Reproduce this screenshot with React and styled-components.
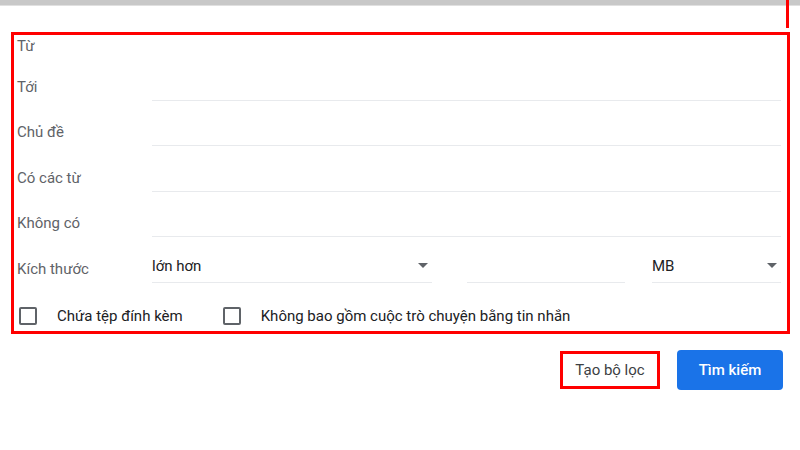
import React from 'react';
import styled, { createGlobalStyle } from 'styled-components';

const Global = createGlobalStyle`
  html, body { margin: 0; background: #fff; }
  body { font-family: Roboto, "Noto Sans", Arial, sans-serif; width: 800px; height: 450px; overflow: hidden; }
`;

const TopBar = styled.div`
  height: 5px;
  background: #c8c8c8;
  border-bottom: 1px solid #e0e0e0;
`;

const Marker = styled.div`
  position: absolute;
  left: 786px;
  top: 0;
  width: 3px;
  height: 28px;
  background: #f00;
`;

const Page = styled.div`
  position: relative;
  padding: 26px 10px 0 11px;
`;

const Box = styled.div`
  border: 3px solid #f00;
  padding: 0 6px 0 3px;
  height: 302px;
  box-sizing: border-box;
`;

const Row = styled.div`
  display: flex;
  align-items: flex-end;
  height: 45.5px;
  ${p => p.$first && 'height: 20px;'}
`;

const Label = styled.div`
  width: 135px;
  color: #5f6368;
  font-size: 15px;
  padding-bottom: 5px;
  flex: none;
`;

const Field = styled.div`
  flex: 1;
  ${p => p.$w && `flex: none; width: ${p.$w}px;`}
  height: 32px;
  border-bottom: 1px solid #e8eaed;
  display: flex;
  align-items: center;
  justify-content: space-between;
  font-size: 15px;
  color: #202124;
  margin-right: ${p => p.$mr || 0}px;
`;

const Caret = styled.span`
  width: 0;
  height: 0;
  border-left: 5px solid transparent;
  border-right: 5px solid transparent;
  border-top: 5px solid #5f6368;
  margin-right: 4px;
`;

const Checks = styled.div`
  display: flex;
  align-items: center;
  height: 66px;
  padding-left: 2px;
`;

const Check = styled.label`
  display: flex;
  align-items: center;
  font-size: 15px;
  color: #202124;
  margin-right: 40px;
`;

const Square = styled.span`
  width: 14px;
  height: 14px;
  border: 2px solid #5f6368;
  border-radius: 2px;
  margin-right: 20px;
`;

const Actions = styled.div`
  display: flex;
  justify-content: flex-end;
  align-items: center;
  gap: 17px;
  padding: 16px 7px 0 0;
`;

const FilterBtn = styled.div`
  border: 3px solid #f00;
  height: 32px;
  width: 94px;
  display: flex;
  align-items: center;
  justify-content: center;
  font-size: 15px;
  color: #3c4043;
`;

const SearchBtn = styled.div`
  background: #1a73e8;
  color: #fff;
  font-size: 15px;
  font-weight: 500;
  width: 106px;
  height: 40px;
  border-radius: 4px;
  display: flex;
  align-items: center;
  justify-content: center;
`;

const rows = ['Tới', 'Chủ đề', 'Có các từ', 'Không có'];

export default function App() {
  return (
    <>
      <Global />
      <TopBar />
      <Marker />
      <Page>
        <Box>
          <Row $first><Label style={{ paddingBottom: 0 }}>Từ</Label></Row>
          {rows.map(r => (
            <Row key={r}><Label>{r}</Label><Field /></Row>
          ))}
          <Row>
            <Label>Kích thước</Label>
            <Field $w={280} $mr={35}>lớn hơn<Caret /></Field>
            <Field $w={158} $mr={27} />
            <Field>MB<Caret /></Field>
          </Row>
          <Checks>
            <Check><Square />Chứa tệp đính kèm</Check>
            <Check><Square />Không bao gồm cuộc trò chuyện bằng tin nhắn</Check>
          </Checks>
        </Box>
        <Actions>
          <FilterBtn>Tạo bộ lọc</FilterBtn>
          <SearchBtn>Tìm kiếm</SearchBtn>
        </Actions>
      </Page>
    </>
  );
}
